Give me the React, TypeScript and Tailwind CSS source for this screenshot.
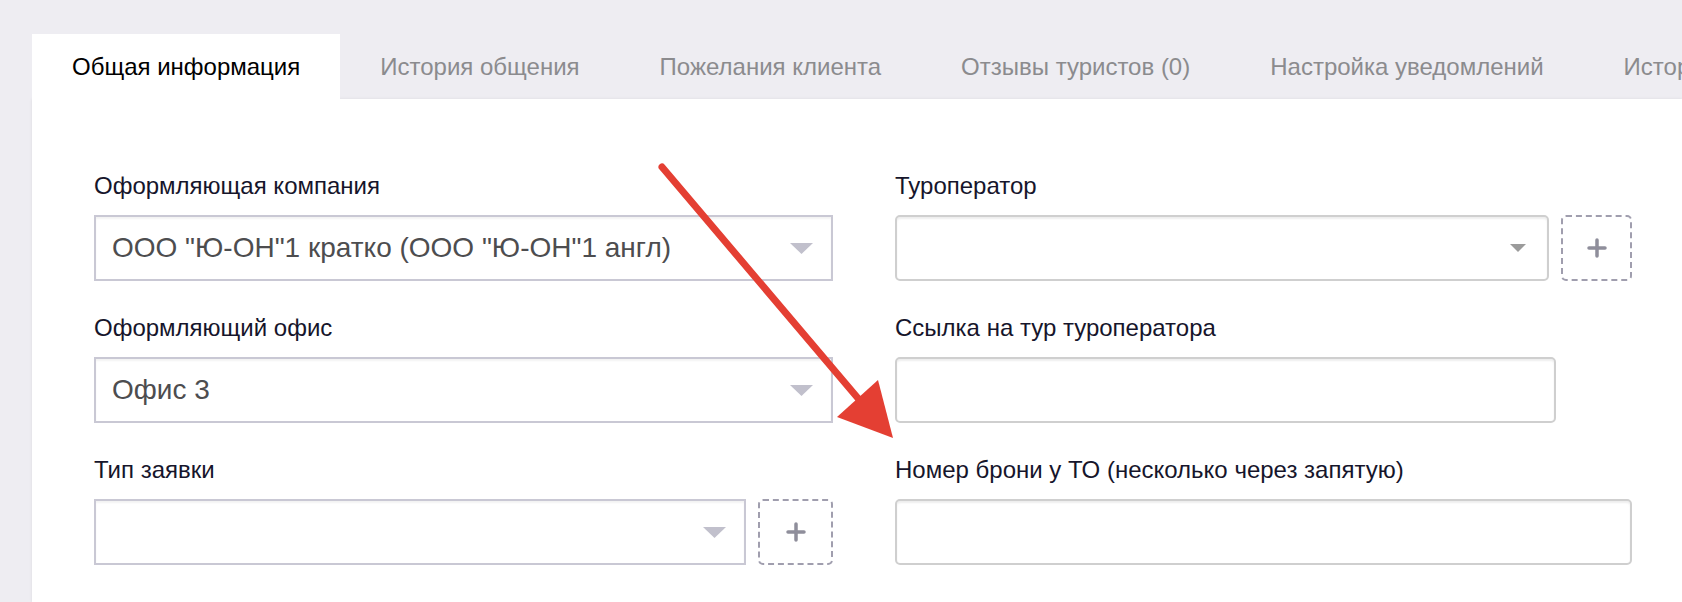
import React from 'react';

const tabs = [
  'Общая информация',
  'История общения',
  'Пожелания клиента',
  'Отзывы туристов (0)',
  'Настройка уведомлений',
  'История изменений',
];

const Caret = ({ small }: { small?: boolean }) =>
  small ? (
    <svg width="16" height="8" viewBox="0 0 16 8" className="shrink-0">
      <path d="M0 0 H16 L8 8 Z" fill="#9b9b9b" />
    </svg>
  ) : (
    <svg width="23" height="11" viewBox="0 0 23 11" className="shrink-0">
      <path d="M0 0 H23 L11.5 11 Z" fill="#c1c0cc" />
    </svg>
  );

const PlusButton = ({ w }: { w: string }) => (
  <button
    className={`${w} h-[66px] shrink-0 flex items-center justify-center border-2 border-dashed border-[#a09eae] rounded-[5px] bg-white`}
  >
    <svg width="20" height="20" viewBox="0 0 20 20">
      <path d="M10 2 V18 M2 10 H18" stroke="#8f8e9b" strokeWidth="3.5" strokeLinecap="round" />
    </svg>
  </button>
);

const Label = ({ children }: { children: React.ReactNode }) => (
  <div className="text-[24px] leading-[28px] text-[#16152b] mb-[15px] whitespace-nowrap">{children}</div>
);

const SelectBox = ({ value, w }: { value?: string; w: string }) => (
  <div
    className={`${w} h-[66px] flex items-center justify-between pl-[16px] pr-[18px] border-2 border-[#c9c8d4] bg-white shadow-[inset_0_2px_2px_rgba(0,0,0,0.05)]`}
  >
    <span className="text-[28px] text-[#4d4d4f] whitespace-nowrap">{value}</span>
    <Caret />
  </div>
);

const TextInput = ({ w, caret }: { w: string; caret?: boolean }) => (
  <div
    className={`${w} h-[66px] flex items-center justify-end pr-[21px] border-2 border-[#cfcfcf] rounded-[5px] bg-white shadow-[inset_0_2px_2px_rgba(0,0,0,0.07)]`}
  >
    {caret && <Caret small />}
  </div>
);

export default function App() {
  return (
    <div
      className="relative h-[602px] overflow-hidden bg-[#eeedf2] pt-[34px] pl-[32px]"
      style={{ fontFamily: '"Liberation Sans", Arial, sans-serif' }}
    >
      <div className="flex h-[65px] whitespace-nowrap">
        {tabs.map((t, i) => (
          <div
            key={t}
            className={
              i === 0
                ? 'flex items-center px-[40px] bg-white text-black text-[24px]'
                : 'flex items-center px-[40px] text-[#8b8b8e] text-[24px]'
            }
          >
            {t}
          </div>
        ))}
      </div>

      <div className="bg-white h-[503px] pl-[62px] pt-[73px] shadow-[0_0_3px_rgba(0,0,0,0.08)]">
        <div className="grid grid-cols-[739px_737px] gap-x-[62px] gap-y-[33px]">
          <div>
            <Label>Оформляющая компания</Label>
            <SelectBox w="w-[739px]" value={'ООО "Ю-ОН"1 кратко (ООО "Ю-ОН"1 англ)'} />
          </div>
          <div>
            <Label>Туроператор</Label>
            <div className="flex gap-[12px]">
              <TextInput w="w-[654px]" caret />
              <PlusButton w="w-[71px]" />
            </div>
          </div>
          <div>
            <Label>Оформляющий офис</Label>
            <SelectBox w="w-[739px]" value="Офис 3" />
          </div>
          <div>
            <Label>Ссылка на тур туроператора</Label>
            <TextInput w="w-[661px]" />
          </div>
          <div>
            <Label>Тип заявки</Label>
            <div className="flex gap-[12px]">
              <SelectBox w="w-[652px]" />
              <PlusButton w="w-[75px]" />
            </div>
          </div>
          <div>
            <Label>Номер брони у ТО (несколько через запятую)</Label>
            <TextInput w="w-[737px]" />
          </div>
        </div>
      </div>

      <svg
        className="absolute inset-0 pointer-events-none"
        width="1682"
        height="602"
        viewBox="0 0 1682 602"
      >
        <line x1="662" y1="167" x2="862" y2="403" stroke="#e43f33" strokeWidth="7" strokeLinecap="round" />
        <polygon points="893,438 837,417 878,380" fill="#e43f33" />
      </svg>
    </div>
  );
}
